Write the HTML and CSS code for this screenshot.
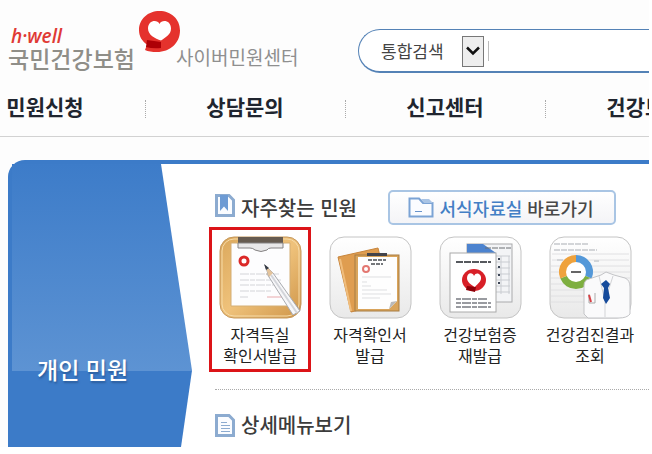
FILE: index.html
```html
<!DOCTYPE html>
<html lang="ko">
<head>
    <meta charset="UTF-8">
    <meta name="viewport" content="width=device-width, initial-scale=1.0">
    <title>국민건강보험 사이버민원센터</title>
    <link rel="stylesheet" href="styles.css">
</head>
<body>
    <div class="page">
        <header class="header">
            <div class="top">
                <div class="logo">
                    <div class="brand">
                        <span class="brand-en">h·well</span>
                        <span class="brand-name">국민건강보험</span>
                    </div>
                    <svg class="bubble" viewBox="0 0 41 41" aria-hidden="true">
                        <path fill="#e5322d" d="M20.500 0C32 0 41 8 41 19.500C41 32 31 41 18 41C13 41 9 40.500 6 39L8 33.500C3 30 0 25.500 0 19C0 8 9 0 20.500 0Z"/>
                        <path fill="#ad0006" d="M8 29L22 31L22 37Q14 38 7 36Z"/>
                        <path fill="#fff" d="M20.500 13C23 8 32 9.500 32 17.500C32 24 26 26.500 22 29.500C16 27.500 9 24 9 17.500C9 9.500 18 8 20.500 13Z"/>
                    </svg>
                    <span class="center-name">사이버민원센터</span>
                </div>
                <form class="search">
                    <div class="search-type">
                        <select aria-label="검색 구분">
                            <option>통합검색</option>
                        </select>
                        <span class="arrow">
                            <svg width="14" height="10" viewBox="0 0 14 10"><path d="M1 1.500L7 7.500L13 1.500" fill="none" stroke="#111" stroke-width="2.500"/></svg>
                        </span>
                    </div>
                    <input type="text" aria-label="검색어">
                </form>
            </div>
            <nav class="menu">
                <a href="#">민원신청</a>
                <a href="#">상담문의</a>
                <a href="#">신고센터</a>
                <a href="#">건강보험</a>
            </nav>
        </header>

        <main class="panel">
            <div class="side">
                <h2>개인 민원</h2>
            </div>
            <div class="content">
                <div class="title-row">
                    <svg class="title-icon" viewBox="0 0 20 23" aria-hidden="true">
                        <path d="M1.500 1.500H14L18.500 6V21.500H1.500Z" fill="#fafcff" stroke="#8cabd0" stroke-width="3"/>
                        <path d="M5 1H13V17L9 12.500L5 17Z" fill="#6d9bd4"/>
                    </svg>
                    <h3>자주찾는 민원</h3>
                    <button type="button" class="forms-btn">
                        <svg width="26" height="21" viewBox="0 0 26 21" aria-hidden="true">
                            <path d="M1.500 19.500V1.500H11L15 6H24.500V19.500Z" fill="#fbfcff" stroke="#7ba3d5" stroke-width="2"/>
                            <path d="M13 2H21L25 6H16Z" fill="#a9c4e5"/>
                            <path d="M7 14.500H14" stroke="#6994cb"/>
                        </svg>
                        <span><em>서식자료실</em> 바로가기</span>
                    </button>
                </div>

                <ul class="services">
                    <li class="selected">
                        <a href="#">
                            <svg viewBox="0 0 83 83" aria-hidden="true">
                                <defs>
                                    <linearGradient id="wood" x1="0" y1="0" x2="1" y2="1">
                                        <stop offset="0" stop-color="#dba85c"/>
                                        <stop offset=".5" stop-color="#efc27b"/>
                                        <stop offset="1" stop-color="#cf964a"/>
                                    </linearGradient>
                                    <linearGradient id="tile" x1="0" y1="0" x2="0" y2="1">
                                        <stop offset="0" stop-color="#fff"/>
                                        <stop offset="1" stop-color="#e9e9e9"/>
                                    </linearGradient>
                                </defs>
                                <rect x="1" y="1" width="81" height="81" rx="14" fill="url(#wood)" stroke="#c5985c"/>
                                <rect x="3" y="3" width="77" height="77" rx="12" fill="none" stroke="#f6dba8"/>
                                <path d="M12 7H71V70H12Z" fill="#fdfdfe" stroke="#d4ae75"/>
                                <path d="M19 1H64V9H19Z" fill="#665b50"/>
                                <path d="M19 7H64V12H52Q49 12 48 14Q42 17 36 14Q34 12 31 12H19Z" fill="#e9e8e9" stroke="#858383"/>
                                <circle cx="25" cy="25" r="4" fill="#fff" stroke="#db2928" stroke-width="3"/>
                                <g stroke="#d3d4d8">
                                    <path d="M21 38H60M21 44H62M21 49H62M21 55H52" stroke-dasharray="9 1 5 1"/>
                                    <path d="M21 61H29"/>
                                    <path d="M48 61H63" stroke="#e8aaad"/>
                                </g>
                                <path d="M48 37L81 75" stroke="#9e8a73" stroke-width="3" opacity=".4"/>
                                <path d="M46 29L54 37L81 75L74 79L50 41Z" fill="#f7f7f9" stroke="#a9abb0"/>
                                <path d="M52 39L78 77" stroke="#d3d5da" stroke-width="2"/>
                                <path d="M46 29L50 41L54 37Z" fill="#e4c49c"/>
                                <path d="M45 28L47 34L50 32Z" fill="#343a45"/>
                            </svg>
                            <span>자격득실<br>확인서발급</span>
                        </a>
                    </li>
                    <li>
                        <a href="#">
                            <svg viewBox="0 0 83 83" aria-hidden="true">
                                <rect x="1" y="1" width="81" height="81" rx="14" fill="url(#tile)" stroke="#c4c4c4"/>
                                <path d="M9 21L49 12L62 66L22 76Z" fill="#df9d50" stroke="#c7853c"/>
                                <path d="M11 23L22 75" stroke="#f0bd7c" stroke-width="2"/>
                                <rect x="26" y="19" width="44" height="56" fill="#d9a45b" stroke="#a77c43"/>
                                <path d="M29 21H68V65L60 73H29Z" fill="#fefefe"/>
                                <path d="M60 73L62 66L68 65Z" fill="#b9b9b9"/>
                                <path d="M38 17H58V20H38Z" fill="#42434a"/>
                                <path d="M39 24H57M42 28H54" stroke="#75787c" stroke-width="2" stroke-dasharray="4 1"/>
                                <circle cx="37" cy="33" r="3" fill="#fff" stroke="#e37771" stroke-width="2"/>
                                <path d="M33 41H62M33 46H38M33 50H42M33 54H58M33 58H62M33 62H51" stroke="#dedfe1"/>
                            </svg>
                            <span>자격확인서<br>발급</span>
                        </a>
                    </li>
                    <li>
                        <a href="#">
                            <svg viewBox="0 0 83 83" aria-hidden="true">
                                <rect x="1" y="1" width="81" height="81" rx="14" fill="url(#tile)" stroke="#c4c4c4"/>
                                <rect x="28" y="8" width="45" height="58" fill="#f3f4f6" stroke="#a9aaac"/>
                                <path d="M28 8H44L57 17H28Z" fill="#4c83cf"/>
                                <path d="M46 12H72" stroke="#6b6e73" stroke-dasharray="6 1"/>
                                <path d="M57 20H71M57 26H71M57 32H71M57 38H71M57 44H71M57 50H71M57 56H71M62 20V58M70 20V58" stroke="#c9ccd1"/>
                                <path d="M60 22V50" stroke="#3e4757" stroke-width="2" stroke-dasharray="2 6"/>
                                <rect x="11" y="17" width="46" height="59" fill="#fff" stroke="#aaa"/>
                                <path d="M17 26H52" stroke="#56595e" stroke-width="2" stroke-dasharray="7 1"/>
                                <ellipse cx="35" cy="44" rx="12" ry="11" fill="#d81f27"/>
                                <path d="M28 50L37 51L36 56L27 54Z" fill="#8e0009"/>
                                <path d="M35 40C37 35 43 38 42 43C41 47 37 49 36 51C32 49 28 46 28 42C28 36 34 36 35 40Z" fill="#fff"/>
                                <path d="M17 63H49M17 67H52M17 71H52" stroke="#999ba0" stroke-width="2" stroke-dasharray="5 1 9 1"/>
                            </svg>
                            <span>건강보험증<br>재발급</span>
                        </a>
                    </li>
                    <li>
                        <a href="#">
                            <svg viewBox="0 0 83 83" aria-hidden="true">
                                <rect x="1" y="1" width="81" height="81" rx="14" fill="url(#tile)" stroke="#c4c4c4"/>
                                <path d="M3 18H80M3 24H80M2 30H81M2 36H81M2 42H81M2 48H81M2 54H81M2 60H81M2 66H81" stroke="#e0e0e2"/>
                                <path d="M5 8H40M5 14H48M8 24H15M45 25H50" stroke="#d3d5d8" stroke-width="2" stroke-dasharray="6 1"/>
                                <g fill="none" stroke-width="8">
                                    <path d="M27 23A13 13 0 0 1 39 41" stroke="#5498d8"/>
                                    <path d="M39 41A13 13 0 0 1 15 41" stroke="#7eaf40"/>
                                    <path d="M15 41A13 13 0 0 1 27 23" stroke="#efa23c"/>
                                </g>
                                <circle cx="27" cy="36" r="10" fill="#fff"/>
                                <path d="M22 36H32" stroke="#666" stroke-width="2"/>
                                <path d="M35 78V50Q35 44 40 43L52 39L57 36L65 39L76 42Q81 44 81 51V78Q78 82 70 82H39Z" fill="#fafafb" stroke="#c3c4c7"/>
                                <path d="M50 40L56 65L64 40M56 65V81" fill="none" stroke="#d2d3d6"/>
                                <path d="M52 48L57 44L61 48L59 52L61 62L57 68L54 62L55 52Z" fill="#164b9b"/>
                                <path d="M40 58V67H46V57" fill="none" stroke="#aaa"/>
                                <path d="M40 59L42 66" stroke="#d74045" stroke-width="2"/>
                            </svg>
                            <span>건강검진결과<br>조회</span>
                        </a>
                    </li>
                </ul>

                <div class="detail">
                    <svg class="title-icon" viewBox="0 0 20 23" aria-hidden="true">
                        <path d="M1.500 1.500H14L18.500 6V21.500H1.500Z" fill="#fafcff" stroke="#8cabd0" stroke-width="3"/>
                        <path d="M6 8.500H12M6 11.500H15M6 14.500H15M6 17.500H15" stroke="#8cabd0"/>
                    </svg>
                    <h3>상세메뉴보기</h3>
                </div>
            </div>
        </main>
    </div>
</body>
</html>
```

FILE: styles.css
```css
body {
    margin: 0;
    background: #fff;
    color: #3c3c3c;
    font-family: "Noto Sans CJK KR", sans-serif;
}
h2, h3, ul {
    margin: 0;
    padding: 0;
}
a {
    color: inherit;
    text-decoration: none;
}
svg {
    display: block;
    flex: none;
}
.page {
    margin-right: 3px;
    overflow: hidden;
    background: #fdfdfd;
}

/* header */
.header {
    border-bottom: 1px solid #d2d2d2;
}
.top {
    display: flex;
    align-items: flex-start;
    padding-left: 8px;
    height: 84px;
}
.logo {
    display: flex;
    flex: none;
    align-items: flex-start;
    width: 350px;
    white-space: nowrap;
}
.brand {
    display: flex;
    flex-direction: column;
    width: 131px;
    padding-top: 26px;
}
.brand-en {
    padding-left: 3px;
    color: #e03a35;
    font: italic 600 19px/20px "Open Sans", sans-serif;
}
.brand-name {
    color: #8f8e88;
    font-size: 23px;
    font-weight: 500;
    line-height: 24px;
}
.bubble {
    width: 41px;
    height: 41px;
    margin-top: 11px;
}
.center-name {
    margin: 45px 0 0 -4px;
    color: #8f8f8f;
    font-size: 19px;
    line-height: 24px;
}
.search {
    display: flex;
    flex: 1;
    align-items: center;
    box-sizing: border-box;
    height: 44px;
    margin-top: 29px;
    padding-left: 22px;
    border: 1px solid #5482b6;
    border-bottom-width: 2px;
    border-right: 0;
    border-radius: 22px 0 0 22px;
    background: #fff;
}
.search-type {
    position: relative;
}
.search select {
    appearance: none;
    width: 103px;
    height: 30px;
    padding: 0;
    border: 0;
    background: none;
    color: #444;
    font: 17px/30px "Noto Sans CJK KR", sans-serif;
}
.arrow {
    position: absolute;
    top: 0;
    right: 0;
    display: flex;
    align-items: center;
    justify-content: center;
    box-sizing: border-box;
    width: 22px;
    height: 31px;
    border: 1px solid #777;
    background: #eee;
    pointer-events: none;
}
.search input {
    flex: 1;
    min-width: 0;
    height: 20px;
    margin-left: 4px;
    padding: 0 8px;
    border: 0;
    border-left: 1px solid #bbb;
    outline: 0;
    background: none;
    font-size: 16px;
}
.menu {
    display: flex;
    margin-left: -55px;
    padding-bottom: 8px;
}
.menu a {
    flex: none;
    position: relative;
    width: 200px;
    color: #20252f;
    font-size: 21px;
    font-weight: 700;
    line-height: 44px;
    text-align: center;
}
.menu a + a::before {
    content: "";
    position: absolute;
    top: 16px;
    left: 0;
    height: 18px;
    border-left: 1px dotted #aaa;
}

/* service panel */
.panel {
    display: flex;
    margin: 23px 0 0 8px;
    border-top: 4px solid #3c7bc8;
    border-left: 4px solid #3c7bc8;
    border-radius: 17px 0 0 0;
    background: #fff;
}
.side {
    flex: none;
    width: 180px;
    background: linear-gradient(#3d7cc9, #5d93d3 73%, #3c7bc8 73%);
    clip-path: polygon(0 0, 149px 0, 100% 73%, 169px 100%, 0 100%);
}
.side h2 {
    padding: 187px 0 0 25px;
    color: #fff;
    font-size: 23px;
    font-weight: 500;
    line-height: 36px;
    text-shadow: 1px 2px 2px #2c5e9d;
}
.content {
    flex: 1;
    min-width: 0;
    padding: 26px 0 10px 23px;
}
.title-row, .detail {
    display: flex;
    align-items: center;
}
.title-icon {
    width: 20px;
    height: 23px;
    margin-right: 6px;
}
.title-row .title-icon {
    margin-bottom: 4px;
}
h3 {
    font-size: 20px;
    font-weight: 500;
    line-height: 24px;
    white-space: nowrap;
}
.forms-btn {
    display: flex;
    align-items: center;
    justify-content: center;
    gap: 5px;
    width: 228px;
    height: 35px;
    margin-left: 31px;
    padding: 0 2px 0 0;
    border: 2px solid #a9c5e4;
    border-radius: 5px;
    background: linear-gradient(#fff, #f4f4f7);
    color: #484848;
    font: 500 18px/24px "Noto Sans CJK KR", sans-serif;
    white-space: nowrap;
    cursor: pointer;
}
.forms-btn em {
    color: #437fc5;
    font-style: normal;
}
.services {
    display: flex;
    gap: 8px;
    margin: 2px 0 17px -6px;
    list-style: none;
}
.services li {
    flex: none;
    box-sizing: border-box;
    width: 102px;
    height: 145px;
    padding-top: 6px;
    border: 3px solid transparent;
}
.services .selected {
    border-color: #dc1418;
}
.services a {
    display: flex;
    flex-direction: column;
    align-items: center;
    gap: 5px;
    color: #222;
    font-size: 16px;
    line-height: 21px;
    text-align: center;
    white-space: nowrap;
}
.services svg {
    width: 83px;
    height: 83px;
}
.detail {
    padding-top: 23px;
    border-top: 1px dotted #aaa;
}
```
